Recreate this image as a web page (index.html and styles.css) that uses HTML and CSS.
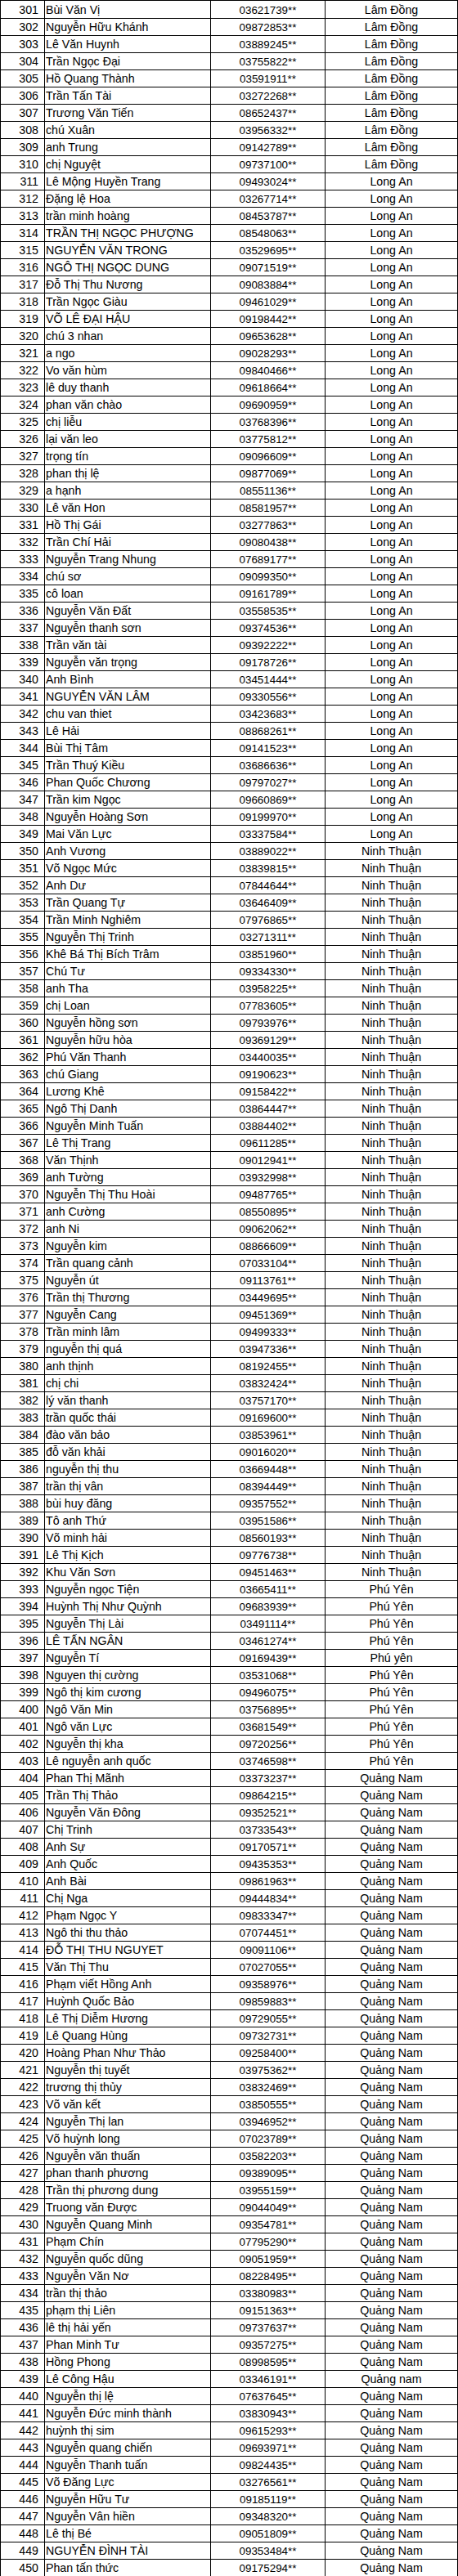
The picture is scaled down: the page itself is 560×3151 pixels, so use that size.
FILE: index.html
```html
<!DOCTYPE html>
<html lang="vi">
<head>
<meta charset="utf-8">
<title>Danh sách</title>
<link rel="stylesheet" href="styles.css">
</head>
<body>
<div class="sheet">
<div class="row"><div class="no">301</div><div class="name">Bùi Văn Vị</div><div class="phone">03621739**</div><div class="prov">Lâm Đồng</div></div>
<div class="row"><div class="no">302</div><div class="name">Nguyễn Hữu Khánh</div><div class="phone">09872853**</div><div class="prov">Lâm Đồng</div></div>
<div class="row"><div class="no">303</div><div class="name">Lê Văn Huynh</div><div class="phone">03889245**</div><div class="prov">Lâm Đồng</div></div>
<div class="row"><div class="no">304</div><div class="name">Trần Ngọc Đại</div><div class="phone">03755822**</div><div class="prov">Lâm Đồng</div></div>
<div class="row"><div class="no">305</div><div class="name">Hồ Quang Thành</div><div class="phone">03591911**</div><div class="prov">Lâm Đồng</div></div>
<div class="row"><div class="no">306</div><div class="name">Trần Tấn Tài</div><div class="phone">03272268**</div><div class="prov">Lâm Đồng</div></div>
<div class="row"><div class="no">307</div><div class="name">Trương Văn Tiến</div><div class="phone">08652437**</div><div class="prov">Lâm Đồng</div></div>
<div class="row"><div class="no">308</div><div class="name">chú Xuân</div><div class="phone">03956332**</div><div class="prov">Lâm Đồng</div></div>
<div class="row"><div class="no">309</div><div class="name">anh Trung</div><div class="phone">09142789**</div><div class="prov">Lâm Đồng</div></div>
<div class="row"><div class="no">310</div><div class="name">chị Nguyệt</div><div class="phone">09737100**</div><div class="prov">Lâm Đồng</div></div>
<div class="row"><div class="no">311</div><div class="name">Lê Mộng Huyền Trang</div><div class="phone">09493024**</div><div class="prov">Long An</div></div>
<div class="row"><div class="no">312</div><div class="name">Đặng lệ Hoa</div><div class="phone">03267714**</div><div class="prov">Long An</div></div>
<div class="row"><div class="no">313</div><div class="name">trần minh hoàng</div><div class="phone">08453787**</div><div class="prov">Long An</div></div>
<div class="row"><div class="no">314</div><div class="name">TRẦN THỊ NGỌC PHƯỢNG</div><div class="phone">08548063**</div><div class="prov">Long An</div></div>
<div class="row"><div class="no">315</div><div class="name">NGUYỄN VĂN TRONG</div><div class="phone">03529695**</div><div class="prov">Long An</div></div>
<div class="row"><div class="no">316</div><div class="name">NGÔ THỊ NGỌC DUNG</div><div class="phone">09071519**</div><div class="prov">Long An</div></div>
<div class="row"><div class="no">317</div><div class="name">Đỗ Thị Thu Nương</div><div class="phone">09083884**</div><div class="prov">Long An</div></div>
<div class="row"><div class="no">318</div><div class="name">Trần Ngọc Giàu</div><div class="phone">09461029**</div><div class="prov">Long An</div></div>
<div class="row"><div class="no">319</div><div class="name">VÕ LÊ ĐẠI HẬU</div><div class="phone">09198442**</div><div class="prov">Long An</div></div>
<div class="row"><div class="no">320</div><div class="name">chú 3 nhan</div><div class="phone">09653628**</div><div class="prov">Long An</div></div>
<div class="row"><div class="no">321</div><div class="name">a ngo</div><div class="phone">09028293**</div><div class="prov">Long An</div></div>
<div class="row"><div class="no">322</div><div class="name">Vo văn hùm</div><div class="phone">09840466**</div><div class="prov">Long An</div></div>
<div class="row"><div class="no">323</div><div class="name">lê duy thanh</div><div class="phone">09618664**</div><div class="prov">Long An</div></div>
<div class="row"><div class="no">324</div><div class="name">phan văn chào</div><div class="phone">09690959**</div><div class="prov">Long An</div></div>
<div class="row"><div class="no">325</div><div class="name">chị liễu</div><div class="phone">03768396**</div><div class="prov">Long An</div></div>
<div class="row"><div class="no">326</div><div class="name">lại văn leo</div><div class="phone">03775812**</div><div class="prov">Long An</div></div>
<div class="row"><div class="no">327</div><div class="name">trọng tín</div><div class="phone">09096609**</div><div class="prov">Long An</div></div>
<div class="row"><div class="no">328</div><div class="name">phan thị lệ</div><div class="phone">09877069**</div><div class="prov">Long An</div></div>
<div class="row"><div class="no">329</div><div class="name">a hạnh</div><div class="phone">08551136**</div><div class="prov">Long An</div></div>
<div class="row"><div class="no">330</div><div class="name">Lê văn Hon</div><div class="phone">08581957**</div><div class="prov">Long An</div></div>
<div class="row"><div class="no">331</div><div class="name">Hồ Thị Gái</div><div class="phone">03277863**</div><div class="prov">Long An</div></div>
<div class="row"><div class="no">332</div><div class="name">Trần Chí Hải</div><div class="phone">09080438**</div><div class="prov">Long An</div></div>
<div class="row"><div class="no">333</div><div class="name">Nguyễn Trang Nhung</div><div class="phone">07689177**</div><div class="prov">Long An</div></div>
<div class="row"><div class="no">334</div><div class="name">chú sơ</div><div class="phone">09099350**</div><div class="prov">Long An</div></div>
<div class="row"><div class="no">335</div><div class="name">cô loan</div><div class="phone">09161789**</div><div class="prov">Long An</div></div>
<div class="row"><div class="no">336</div><div class="name">Nguyễn Văn Đất</div><div class="phone">03558535**</div><div class="prov">Long An</div></div>
<div class="row"><div class="no">337</div><div class="name">Nguyễn thanh sơn</div><div class="phone">09374536**</div><div class="prov">Long An</div></div>
<div class="row"><div class="no">338</div><div class="name">Trần văn tài</div><div class="phone">09392222**</div><div class="prov">Long An</div></div>
<div class="row"><div class="no">339</div><div class="name">Nguyễn văn trọng</div><div class="phone">09178726**</div><div class="prov">Long An</div></div>
<div class="row"><div class="no">340</div><div class="name">Anh Bình</div><div class="phone">03451444**</div><div class="prov">Long An</div></div>
<div class="row"><div class="no">341</div><div class="name">NGUYỄN VĂN LÂM</div><div class="phone">09330556**</div><div class="prov">Long An</div></div>
<div class="row"><div class="no">342</div><div class="name">chu van thiet</div><div class="phone">03423683**</div><div class="prov">Long An</div></div>
<div class="row"><div class="no">343</div><div class="name">Lê Hải</div><div class="phone">08868261**</div><div class="prov">Long An</div></div>
<div class="row"><div class="no">344</div><div class="name">Bùi Thị Tâm</div><div class="phone">09141523**</div><div class="prov">Long An</div></div>
<div class="row"><div class="no">345</div><div class="name">Trần Thuý Kiều</div><div class="phone">03686636**</div><div class="prov">Long An</div></div>
<div class="row"><div class="no">346</div><div class="name">Phan Quốc Chương</div><div class="phone">09797027**</div><div class="prov">Long An</div></div>
<div class="row"><div class="no">347</div><div class="name">Trần kim Ngọc</div><div class="phone">09660869**</div><div class="prov">Long An</div></div>
<div class="row"><div class="no">348</div><div class="name">Nguyễn Hoàng Sơn</div><div class="phone">09199970**</div><div class="prov">Long An</div></div>
<div class="row"><div class="no">349</div><div class="name">Mai Văn Lực</div><div class="phone">03337584**</div><div class="prov">Long An</div></div>
<div class="row"><div class="no">350</div><div class="name">Anh Vương</div><div class="phone">03889022**</div><div class="prov">Ninh Thuận</div></div>
<div class="row"><div class="no">351</div><div class="name">Võ Ngọc Mức</div><div class="phone">03839815**</div><div class="prov">Ninh Thuận</div></div>
<div class="row"><div class="no">352</div><div class="name">Anh Dư</div><div class="phone">07844644**</div><div class="prov">Ninh Thuận</div></div>
<div class="row"><div class="no">353</div><div class="name">Trần Quang Tự</div><div class="phone">03646409**</div><div class="prov">Ninh Thuận</div></div>
<div class="row"><div class="no">354</div><div class="name">Trần Minh Nghiêm</div><div class="phone">07976865**</div><div class="prov">Ninh Thuận</div></div>
<div class="row"><div class="no">355</div><div class="name">Nguyễn Thị Trinh</div><div class="phone">03271311**</div><div class="prov">Ninh Thuận</div></div>
<div class="row"><div class="no">356</div><div class="name">Khê Bá Thị Bích Trâm</div><div class="phone">03851960**</div><div class="prov">Ninh Thuận</div></div>
<div class="row"><div class="no">357</div><div class="name">Chú Tư</div><div class="phone">09334330**</div><div class="prov">Ninh Thuận</div></div>
<div class="row"><div class="no">358</div><div class="name">anh Tha</div><div class="phone">03958225**</div><div class="prov">Ninh Thuận</div></div>
<div class="row"><div class="no">359</div><div class="name">chị Loan</div><div class="phone">07783605**</div><div class="prov">Ninh Thuận</div></div>
<div class="row"><div class="no">360</div><div class="name">Nguyễn hồng sơn</div><div class="phone">09793976**</div><div class="prov">Ninh Thuận</div></div>
<div class="row"><div class="no">361</div><div class="name">Nguyễn hữu hòa</div><div class="phone">09369129**</div><div class="prov">Ninh Thuận</div></div>
<div class="row"><div class="no">362</div><div class="name">Phú Văn Thanh</div><div class="phone">03440035**</div><div class="prov">Ninh Thuận</div></div>
<div class="row"><div class="no">363</div><div class="name">chú Giang</div><div class="phone">09190623**</div><div class="prov">Ninh Thuận</div></div>
<div class="row"><div class="no">364</div><div class="name">Lương Khê</div><div class="phone">09158422**</div><div class="prov">Ninh Thuận</div></div>
<div class="row"><div class="no">365</div><div class="name">Ngô Thị Danh</div><div class="phone">03864447**</div><div class="prov">Ninh Thuận</div></div>
<div class="row"><div class="no">366</div><div class="name">Nguyễn Minh Tuấn</div><div class="phone">03884402**</div><div class="prov">Ninh Thuận</div></div>
<div class="row"><div class="no">367</div><div class="name">Lê Thị Trang</div><div class="phone">09611285**</div><div class="prov">Ninh Thuận</div></div>
<div class="row"><div class="no">368</div><div class="name">Văn Thịnh</div><div class="phone">09012941**</div><div class="prov">Ninh Thuận</div></div>
<div class="row"><div class="no">369</div><div class="name">anh Tường</div><div class="phone">03932998**</div><div class="prov">Ninh Thuận</div></div>
<div class="row"><div class="no">370</div><div class="name">Nguyễn Thị Thu Hoài</div><div class="phone">09487765**</div><div class="prov">Ninh Thuận</div></div>
<div class="row"><div class="no">371</div><div class="name">anh Cường</div><div class="phone">08550895**</div><div class="prov">Ninh Thuận</div></div>
<div class="row"><div class="no">372</div><div class="name">anh Ni</div><div class="phone">09062062**</div><div class="prov">Ninh Thuận</div></div>
<div class="row"><div class="no">373</div><div class="name">Nguyễn kim</div><div class="phone">08866609**</div><div class="prov">Ninh Thuận</div></div>
<div class="row"><div class="no">374</div><div class="name">Trần quang cảnh</div><div class="phone">07033104**</div><div class="prov">Ninh Thuận</div></div>
<div class="row"><div class="no">375</div><div class="name">Nguyễn út</div><div class="phone">09113761**</div><div class="prov">Ninh Thuận</div></div>
<div class="row"><div class="no">376</div><div class="name">Trần thị Thương</div><div class="phone">03449695**</div><div class="prov">Ninh Thuận</div></div>
<div class="row"><div class="no">377</div><div class="name">Nguyễn Cang</div><div class="phone">09451369**</div><div class="prov">Ninh Thuận</div></div>
<div class="row"><div class="no">378</div><div class="name">Trần minh lâm</div><div class="phone">09499333**</div><div class="prov">Ninh Thuận</div></div>
<div class="row"><div class="no">379</div><div class="name">nguyễn thị quá</div><div class="phone">03947336**</div><div class="prov">Ninh Thuận</div></div>
<div class="row"><div class="no">380</div><div class="name">anh thịnh</div><div class="phone">08192455**</div><div class="prov">Ninh Thuận</div></div>
<div class="row"><div class="no">381</div><div class="name">chị chi</div><div class="phone">03832424**</div><div class="prov">Ninh Thuận</div></div>
<div class="row"><div class="no">382</div><div class="name">lý văn thanh</div><div class="phone">03757170**</div><div class="prov">Ninh Thuận</div></div>
<div class="row"><div class="no">383</div><div class="name">trần quốc thái</div><div class="phone">09169600**</div><div class="prov">Ninh Thuận</div></div>
<div class="row"><div class="no">384</div><div class="name">đào văn bảo</div><div class="phone">03853961**</div><div class="prov">Ninh Thuận</div></div>
<div class="row"><div class="no">385</div><div class="name">đỗ văn khải</div><div class="phone">09016020**</div><div class="prov">Ninh Thuận</div></div>
<div class="row"><div class="no">386</div><div class="name">nguyễn thị thu</div><div class="phone">03669448**</div><div class="prov">Ninh Thuận</div></div>
<div class="row"><div class="no">387</div><div class="name">trần thị vân</div><div class="phone">08394449**</div><div class="prov">Ninh Thuận</div></div>
<div class="row"><div class="no">388</div><div class="name">bùi huy đăng</div><div class="phone">09357552**</div><div class="prov">Ninh Thuận</div></div>
<div class="row"><div class="no">389</div><div class="name">Tô anh Thứ</div><div class="phone">03951586**</div><div class="prov">Ninh Thuận</div></div>
<div class="row"><div class="no">390</div><div class="name">Võ minh hải</div><div class="phone">08560193**</div><div class="prov">Ninh Thuận</div></div>
<div class="row"><div class="no">391</div><div class="name">Lê Thị Kịch</div><div class="phone">09776738**</div><div class="prov">Ninh Thuận</div></div>
<div class="row"><div class="no">392</div><div class="name">Khu Văn Sơn</div><div class="phone">09451463**</div><div class="prov">Ninh Thuận</div></div>
<div class="row"><div class="no">393</div><div class="name">Nguyễn ngọc Tiện</div><div class="phone">03665411**</div><div class="prov">Phú Yên</div></div>
<div class="row"><div class="no">394</div><div class="name">Huỳnh Thị Như Quỳnh</div><div class="phone">09683939**</div><div class="prov">Phú Yên</div></div>
<div class="row"><div class="no">395</div><div class="name">Nguyễn Thị Lài</div><div class="phone">03491114**</div><div class="prov">Phú Yên</div></div>
<div class="row"><div class="no">396</div><div class="name">LÊ TẤN NGÂN</div><div class="phone">03461274**</div><div class="prov">Phú Yên</div></div>
<div class="row"><div class="no">397</div><div class="name">Nguyễn Tí</div><div class="phone">09169439**</div><div class="prov">Phú yên</div></div>
<div class="row"><div class="no">398</div><div class="name">Nguyen thị cường</div><div class="phone">03531068**</div><div class="prov">Phú Yên</div></div>
<div class="row"><div class="no">399</div><div class="name">Ngô thị kim cương</div><div class="phone">09496075**</div><div class="prov">Phú Yên</div></div>
<div class="row"><div class="no">400</div><div class="name">Ngô Văn Min</div><div class="phone">03756895**</div><div class="prov">Phú Yên</div></div>
<div class="row"><div class="no">401</div><div class="name">Ngô văn Lực</div><div class="phone">03681549**</div><div class="prov">Phú Yên</div></div>
<div class="row"><div class="no">402</div><div class="name">Nguyễn thị kha</div><div class="phone">09720256**</div><div class="prov">Phú Yên</div></div>
<div class="row"><div class="no">403</div><div class="name">Lê nguyễn anh quốc</div><div class="phone">03746598**</div><div class="prov">Phú Yên</div></div>
<div class="row"><div class="no">404</div><div class="name">Phan Thị Mãnh</div><div class="phone">03373237**</div><div class="prov">Quảng Nam</div></div>
<div class="row"><div class="no">405</div><div class="name">Trần Thị Thảo</div><div class="phone">09864215**</div><div class="prov">Quảng Nam</div></div>
<div class="row"><div class="no">406</div><div class="name">Nguyễn Văn Đông</div><div class="phone">09352521**</div><div class="prov">Quảng Nam</div></div>
<div class="row"><div class="no">407</div><div class="name">Chị Trinh</div><div class="phone">03733543**</div><div class="prov">Quảng Nam</div></div>
<div class="row"><div class="no">408</div><div class="name">Anh Sự</div><div class="phone">09170571**</div><div class="prov">Quảng Nam</div></div>
<div class="row"><div class="no">409</div><div class="name">Anh Quốc</div><div class="phone">09435353**</div><div class="prov">Quảng Nam</div></div>
<div class="row"><div class="no">410</div><div class="name">Anh Bài</div><div class="phone">09861963**</div><div class="prov">Quảng Nam</div></div>
<div class="row"><div class="no">411</div><div class="name">Chị Nga</div><div class="phone">09444834**</div><div class="prov">Quảng Nam</div></div>
<div class="row"><div class="no">412</div><div class="name">Phạm Ngọc Y</div><div class="phone">09833347**</div><div class="prov">Quảng Nam</div></div>
<div class="row"><div class="no">413</div><div class="name">Ngô thi thu thảo</div><div class="phone">07074451**</div><div class="prov">Quảng Nam</div></div>
<div class="row"><div class="no">414</div><div class="name">ĐỖ THỊ THU NGUYET</div><div class="phone">09091106**</div><div class="prov">Quảng Nam</div></div>
<div class="row"><div class="no">415</div><div class="name">Văn Thị Thu</div><div class="phone">07027055**</div><div class="prov">Quảng Nam</div></div>
<div class="row"><div class="no">416</div><div class="name">Phạm viết Hồng Anh</div><div class="phone">09358976**</div><div class="prov">Quảng Nam</div></div>
<div class="row"><div class="no">417</div><div class="name">Huỳnh Quốc Bảo</div><div class="phone">09859883**</div><div class="prov">Quảng Nam</div></div>
<div class="row"><div class="no">418</div><div class="name">Lê Thị Diễm Hương</div><div class="phone">09729055**</div><div class="prov">Quảng Nam</div></div>
<div class="row"><div class="no">419</div><div class="name">Lê Quang Hùng</div><div class="phone">09732731**</div><div class="prov">Quảng Nam</div></div>
<div class="row"><div class="no">420</div><div class="name">Hoàng Phan Như Thảo</div><div class="phone">09258400**</div><div class="prov">Quảng Nam</div></div>
<div class="row"><div class="no">421</div><div class="name">Nguyễn thị tuyết</div><div class="phone">03975362**</div><div class="prov">Quảng Nam</div></div>
<div class="row"><div class="no">422</div><div class="name">trương thị thủy</div><div class="phone">03832469**</div><div class="prov">Quảng Nam</div></div>
<div class="row"><div class="no">423</div><div class="name">Võ văn kết</div><div class="phone">03850555**</div><div class="prov">Quảng Nam</div></div>
<div class="row"><div class="no">424</div><div class="name">Nguyễn Thị lan</div><div class="phone">03946952**</div><div class="prov">Quảng Nam</div></div>
<div class="row"><div class="no">425</div><div class="name">Võ huỳnh long</div><div class="phone">07023789**</div><div class="prov">Quảng Nam</div></div>
<div class="row"><div class="no">426</div><div class="name">Nguyễn văn thuấn</div><div class="phone">03582203**</div><div class="prov">Quảng Nam</div></div>
<div class="row"><div class="no">427</div><div class="name">phan thanh phương</div><div class="phone">09389095**</div><div class="prov">Quảng Nam</div></div>
<div class="row"><div class="no">428</div><div class="name">Trần thị phương dung</div><div class="phone">03955159**</div><div class="prov">Quảng Nam</div></div>
<div class="row"><div class="no">429</div><div class="name">Truong văn Được</div><div class="phone">09044049**</div><div class="prov">Quảng Nam</div></div>
<div class="row"><div class="no">430</div><div class="name">Nguyễn Quang Minh</div><div class="phone">09354781**</div><div class="prov">Quảng Nam</div></div>
<div class="row"><div class="no">431</div><div class="name">Phạm Chín</div><div class="phone">07795290**</div><div class="prov">Quảng Nam</div></div>
<div class="row"><div class="no">432</div><div class="name">Nguyễn quốc dũng</div><div class="phone">09051959**</div><div class="prov">Quảng Nam</div></div>
<div class="row"><div class="no">433</div><div class="name">Nguyễn Văn Nơ</div><div class="phone">08228495**</div><div class="prov">Quảng Nam</div></div>
<div class="row"><div class="no">434</div><div class="name">trần thị thảo</div><div class="phone">03380983**</div><div class="prov">Quảng Nam</div></div>
<div class="row"><div class="no">435</div><div class="name">phạm thị Liên</div><div class="phone">09151363**</div><div class="prov">Quảng Nam</div></div>
<div class="row"><div class="no">436</div><div class="name">lê thị hải yến</div><div class="phone">09737637**</div><div class="prov">Quảng Nam</div></div>
<div class="row"><div class="no">437</div><div class="name">Phan Minh Tư</div><div class="phone">09357275**</div><div class="prov">Quảng Nam</div></div>
<div class="row"><div class="no">438</div><div class="name">Hồng Phong</div><div class="phone">08998595**</div><div class="prov">Quảng Nam</div></div>
<div class="row"><div class="no">439</div><div class="name">Lê Công Hậu</div><div class="phone">03346191**</div><div class="prov">Quảng nam</div></div>
<div class="row"><div class="no">440</div><div class="name">Nguyễn thị lệ</div><div class="phone">07637645**</div><div class="prov">Quảng Nam</div></div>
<div class="row"><div class="no">441</div><div class="name">Nguyễn Đức minh thành</div><div class="phone">03830943**</div><div class="prov">Quảng Nam</div></div>
<div class="row"><div class="no">442</div><div class="name">huỳnh thị sim</div><div class="phone">09615293**</div><div class="prov">Quảng Nam</div></div>
<div class="row"><div class="no">443</div><div class="name">Nguyễn quang chiến</div><div class="phone">09693971**</div><div class="prov">Quảng Nam</div></div>
<div class="row"><div class="no">444</div><div class="name">Nguyễn Thanh tuấn</div><div class="phone">09824435**</div><div class="prov">Quảng Nam</div></div>
<div class="row"><div class="no">445</div><div class="name">Võ Đăng Lực</div><div class="phone">03276561**</div><div class="prov">Quảng Nam</div></div>
<div class="row"><div class="no">446</div><div class="name">Nguyễn Hữu Tư</div><div class="phone">09185119**</div><div class="prov">Quảng Nam</div></div>
<div class="row"><div class="no">447</div><div class="name">Nguyễn Vân hiền</div><div class="phone">09348320**</div><div class="prov">Quảng Nam</div></div>
<div class="row"><div class="no">448</div><div class="name">Lê thị Bé</div><div class="phone">09051809**</div><div class="prov">Quảng Nam</div></div>
<div class="row"><div class="no">449</div><div class="name">NGUYỄN ĐÌNH TÀI</div><div class="phone">09353484**</div><div class="prov">Quảng Nam</div></div>
<div class="row"><div class="no">450</div><div class="name">Phan tấn thức</div><div class="phone">09175294**</div><div class="prov">Quảng Nam</div></div>
</div>
</body>
</html>
```
FILE: styles.css
```css
html, body {
  margin: 0;
  padding: 0;
  background: #ffffff;
}

.sheet {
  width: 560px;
  box-sizing: border-box;
  border-top: 1px solid #000;
  border-left: 1px solid #000;
  font-family: "Liberation Sans", Arial, sans-serif;
  font-size: 14.2px;
  color: #000;
}

.row {
  display: grid;
  grid-template-columns: 54px 203px 140px 162px;
  height: 21px;
}

.row > div {
  box-sizing: border-box;
  border-right: 1px solid #000;
  border-bottom: 1px solid #000;
  padding-top: 2px;
  line-height: 19px;
  white-space: nowrap;
  overflow: visible;
}

.no {
  text-align: right;
  padding-right: 7px;
}

.name {
  padding-left: 1px;
}

.phone {
  text-align: center;
  font-size: 13.4px;
}

.prov {
  text-align: center;
}
```
